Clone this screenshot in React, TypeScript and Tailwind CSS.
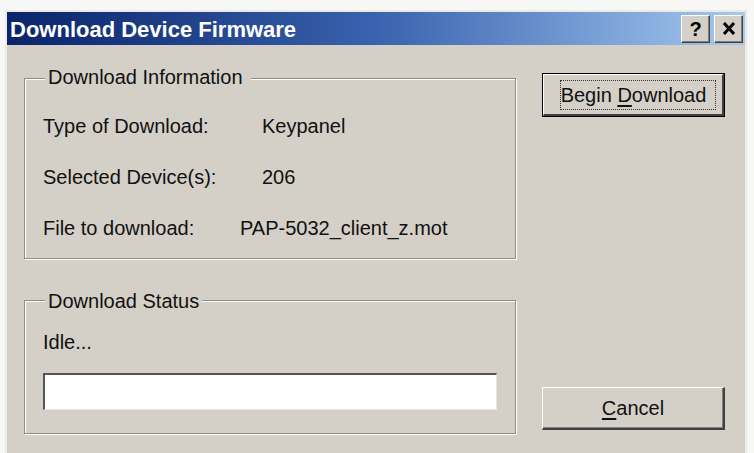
import React from 'react';

// Classic Win2k style dialog: "Download Device Firmware"

const font = { fontFamily: '"Liberation Sans", Arial, sans-serif' };

const TitleButton: React.FC<{ children: React.ReactNode }> = ({ children }) => (
  <div className="w-[29px] h-[28px] bg-[#d4d0c8] border-t border-l border-white border-r border-b border-r-[#404040] border-b-[#404040] flex items-center justify-center shadow-[inset_-1px_-1px_0_#808080]">
    {children}
  </div>
);

const InfoRow: React.FC<{ label: string; value: string; labelWidth: string }> = ({ label, value, labelWidth }) => (
  <div className="flex h-[24px] leading-[24px]">
    <span className={labelWidth}>{label}</span>
    <span>{value}</span>
  </div>
);

const App: React.FC = () => {
  return (
    <div className="w-[754px] h-[453px] bg-[#f7f7f5] pt-[10px] pl-[5px] overflow-hidden text-[20px] text-[#111]" style={font}>
      <div className="w-[742px] h-[460px] bg-[#d4d0c8] border-t-2 border-l-2 border-r-2 border-[#eceae4] flex flex-col">
        {/* title bar */}
        <div className="h-[33px] bg-gradient-to-r from-[#0a246a] via-[#3a62ae] to-[#a6caf0] flex items-center justify-between pl-[3px] pr-[2px]">
          <span className="text-white font-bold text-[22px] leading-[33px] pt-[2px]">Download Device Firmware</span>
          <div className="flex gap-[4px]">
            <TitleButton>
              <span className="font-bold text-[20px] leading-none text-black">?</span>
            </TitleButton>
            <TitleButton>
              <svg width="14" height="13" viewBox="0 0 14 13">
                <path d="M2 1 L12 12 M12 1 L2 12" stroke="#000" strokeWidth="3" />
              </svg>
            </TitleButton>
          </div>
        </div>

        {/* body */}
        <div className="flex pl-[17px]">
          <div className="w-[492px] flex flex-col">
            {/* Download Information */}
            <div className="relative mt-[33px] h-[181px] border border-[#8e8c86] shadow-[inset_1px_1px_0_#fff,1px_1px_0_#fff] pl-[18px] pt-[35px] flex flex-col gap-[27px]">
              <span className="absolute -top-[14px] left-[20px] pl-[3px] pr-[8px] bg-[#d4d0c8] leading-[24px]">Download Information</span>
              <InfoRow label="Type of Download:" value="Keypanel" labelWidth="w-[219px]" />
              <InfoRow label="Selected Device(s):" value="206" labelWidth="w-[219px]" />
              <InfoRow label="File to download:" value="PAP-5032_client_z.mot" labelWidth="w-[197px]" />
            </div>

            {/* Download Status */}
            <div className="relative mt-[41px] h-[134px] border border-[#8e8c86] shadow-[inset_1px_1px_0_#fff,1px_1px_0_#fff] pl-[18px] pt-[29px] pr-[18px]">
              <span className="absolute -top-[12px] left-[20px] pl-[3px] pr-[3px] bg-[#d4d0c8] leading-[24px]">Download Status</span>
              <div className="h-[24px] leading-[24px]">Idle...</div>
              <div className="mt-[19px] h-[37px] bg-white border-t-2 border-l-2 border-[#555] border-r border-b border-r-[#e8e6e0] border-b-[#e8e6e0]" />
            </div>
          </div>

          <div className="ml-[26px] w-[183px] flex flex-col">
            <button className="relative mt-[28px] h-[44px] border border-black bg-[#d4d0c8] text-[20px] text-[#111]">
              <div className="absolute inset-0 border-t border-l border-white border-r-2 border-b-2 border-r-[#404040] border-b-[#404040]" />
              <div className="absolute top-[6px] bottom-[6px] left-[17px] right-[8px] border border-dotted border-[#333]" />
              <span className="relative leading-[24px]">
                Begin <span className="underline underline-offset-[3px]">D</span>ownload
              </span>
            </button>
            <button className="relative mt-[270px] h-[43px] bg-[#d4d0c8] text-[20px] text-[#111] border-t border-l border-white border-r-2 border-b-2 border-r-[#404040] border-b-[#404040] shadow-[inset_-1px_-1px_0_#808080]">
              <span className="leading-[24px]">
                <span className="underline underline-offset-[3px]">C</span>ancel
              </span>
            </button>
          </div>
        </div>
      </div>
    </div>
  );
};

export default App;
